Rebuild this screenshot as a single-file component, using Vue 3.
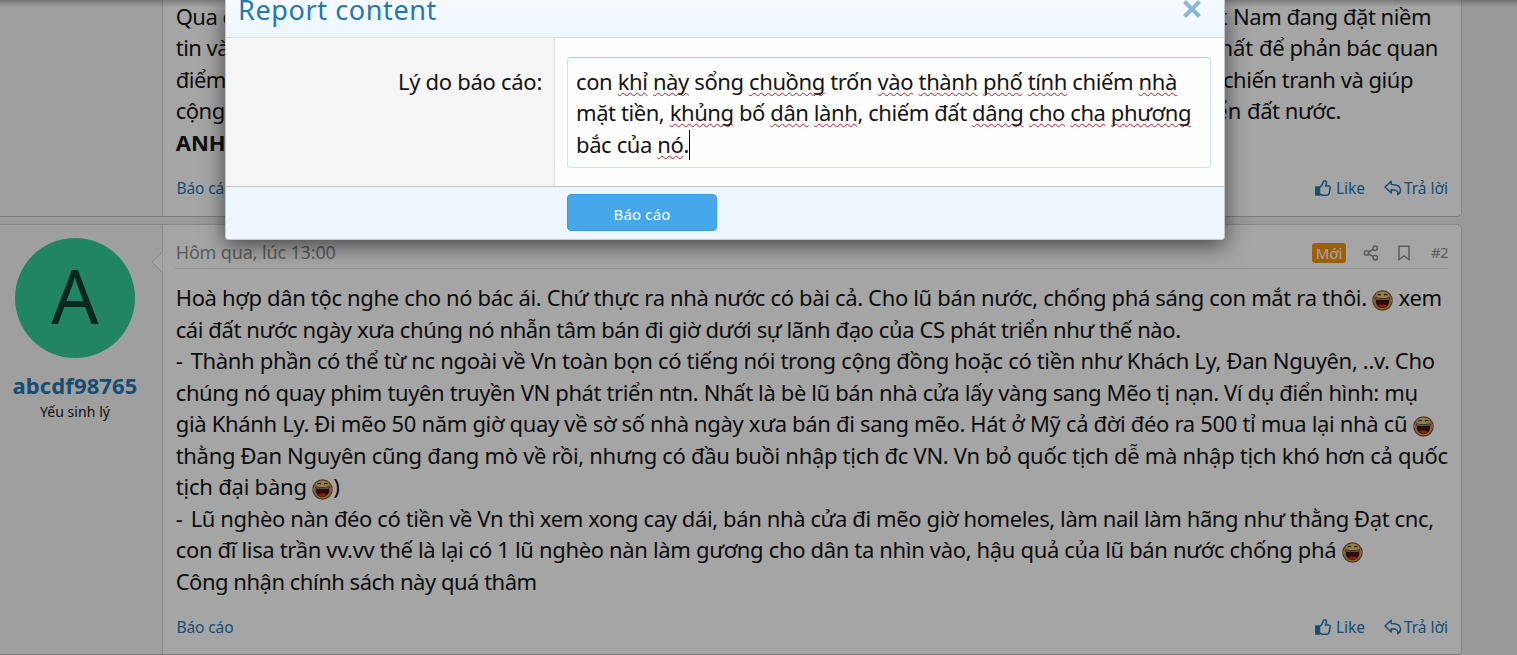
<template>
  <div class="page">
    <svg class="sprites" aria-hidden="true">
      <symbol id="thumb" viewBox="0 0 16 16">
        <path d="M.8 7h3.700v8.200H.8z" fill="currentColor" />
        <path d="M.8 7h3.700v8H.8zM4.500 7.600c2-1.600 3.200-3.200 3.600-5.100C8.300 1.300 8.700.8 9.500.8c1.500 0 2.100 1.100 1.900 2.500-.1 1-.6 2-1 2.700h3.100c1.100 0 1.800.9 1.600 1.900l-.9 5.300c-.2 1.300-.9 2-2.200 2H8.300c-1.500 0-2.500-.4-3.800-1.200" fill="none" stroke="currentColor" stroke-width="1.500" stroke-linejoin="round" />
      </symbol>
      <symbol id="reply" viewBox="0 0 18 16">
        <path d="M1 7 7.200 1.200v3.200c5.400 0 9.300 1.400 9.300 5.700 0 1.900-1.100 3.700-2.800 4.500.8-3.100-.8-4.800-6.500-4.800V13z" fill="none" stroke="currentColor" stroke-width="1.500" stroke-linejoin="round" />
      </symbol>
      <symbol id="smile" viewBox="0 0 21 21">
        <circle cx="10.500" cy="10.500" r="9.700" fill="#c99b45" stroke="#6f5735" stroke-width="1.200" />
        <ellipse cx="10.500" cy="5" rx="6.500" ry="3.200" fill="#e6c774" />
        <path d="M5.500 5q1.700-1.300 3.500 0M12 5q1.700-1.300 3.500 0" fill="none" stroke="#30200e" stroke-width="1.200" />
        <path d="M3.300 7.500q7.200 1.500 14.400 0c.3 6.500-2.700 10.500-7.200 10.500s-7.500-4-7.200-10.500z" fill="#421713" />
        <path d="M4.200 8q6.300 1.400 12.600 0v1.700H4.200z" fill="#a39a8c" />
        <path d="M6 15.500q4.500-2.500 9 0-1.500 2.300-4.500 2.300T6 15.500z" fill="#e3211d" />
        <circle cx="2" cy="10.500" r="1.900" fill="#d48981" />
        <circle cx="19" cy="10.500" r="1.900" fill="#d48981" />
      </symbol>
    </svg>

    <article class="post first">
      <aside class="user"></aside>
      <div class="main">
        <div class="body">
          <div v-for="line in hiddenLines" :key="line.start" class="line split">
            <span :class="line.bold ? 'strong' : 'start'">{{ line.start }}</span>
            <span v-if="line.end" class="tail" :style="{ marginRight: 1448 - line.right + 'px' }">{{ line.pre }}<span v-fit="line.width" class="fit">{{ line.end }}</span></span>
          </div>
        </div>
        <footer class="actions">
          <a v-fit="57" class="fit">Báo cáo</a>
          <a class="like"><svg><use href="#thumb" /></svg><span v-fit="29" class="fit">Like</span></a>
          <a class="reply"><svg><use href="#reply" /></svg><span v-fit="44" class="fit">Trả lời</span></a>
        </footer>
      </div>
    </article>

    <article class="post second">
      <aside class="user">
        <div class="avatar">A</div>
        <a v-fit="125" class="name fit">abcdf98765</a>
        <span v-fit="70" class="rank fit">Yếu sinh lý</span>
      </aside>
      <div class="main">
        <svg class="arrow" viewBox="0 0 12 24"><path d="M11.500 1.500 1 12l10.500 10.500" /></svg>
        <header class="meta">
          <time v-fit="160" class="fit">Hôm qua, lúc 13:00</time>
          <span class="badge">Mới</span>
          <svg class="share" viewBox="0 0 16 16">
            <circle cx="3.500" cy="8" r="2.200" /><circle cx="12.200" cy="3.200" r="2.200" /><circle cx="12.200" cy="12.800" r="2.200" />
            <path d="m5.500 7 4.700-2.700M5.500 9l4.700 2.700" />
          </svg>
          <svg class="bookmark" viewBox="0 0 12 16"><path d="M1 1.200h10v13.300l-5-3.600-5 3.600z" /></svg>
          <span v-fit="17" class="number fit">#2</span>
        </header>
        <div class="body">
          <div v-for="(line, i) in lines" :key="i" class="line">
            <span v-if="line.item" class="dash">-</span><span v-fit="line.width" class="fit"><template v-for="(part, j) in line.text.split('*')" :key="j"><svg v-if="j" class="smile"><use href="#smile" /></svg>{{ part }}</template></span>
          </div>
        </div>
        <footer class="actions">
          <a v-fit="57" class="fit">Báo cáo</a>
          <a class="like"><svg><use href="#thumb" /></svg><span v-fit="29" class="fit">Like</span></a>
          <a class="reply"><svg><use href="#reply" /></svg><span v-fit="44" class="fit">Trả lời</span></a>
        </footer>
      </div>
    </article>

    <div class="overlay">
      <div class="dialog" role="dialog">
        <header class="title">
          <span v-fit="199" class="fit">Report content</span>
          <svg class="close" viewBox="0 0 20 20"><path d="m2.500 2.500 15 15m0-15-15 15" /></svg>
        </header>
        <div class="row">
          <label class="label"><span v-fit="144" class="fit">Lý do báo cáo:</span></label>
          <div class="field">
            <div class="textarea" role="textbox">
              <div v-for="(line, i) in reason" :key="i" class="line">
                <span v-fit="line.width" class="fit"><template v-for="(part, j) in line.text.split('_')" :key="j"><span :class="{ wrong: j % 2 }">{{ part }}</span></template></span><i v-if="i === reason.length - 1" class="caret"></i>
              </div>
            </div>
          </div>
        </div>
        <footer class="submit">
          <button type="button"><span v-fit="57" class="fit">Báo cáo</span></button>
        </footer>
      </div>
    </div>
  </div>
</template>

<script setup>
// Spread the letters so that the text takes the given width
const vFit = {
  mounted(el, { value }) {
    const spacing = (value - el.getBoundingClientRect().width) / el.textContent.length
    el.style.letterSpacing = `${spacing}px`
  },
}

const hiddenLines = [
  { start: 'Qua ch', pre: 'Việt ', end: 'Nam đang đặt niềm', width: 198, right: 1431 },
  { start: 'tin và', pre: 'nhất ', end: 'để phản bác quan', width: 179, right: 1438 },
  { start: 'điểm', pre: '', end: 'chiến tranh và giúp', width: 190, right: 1413 },
  { start: 'cộng', pre: 'triển ', end: 'đất nước.', width: 94, right: 1341 },
  { start: 'ANH', bold: true },
]

// * marks a smiley
const lines = [
  { width: 1266, text: 'Hoà hợp dân tộc nghe cho nó bác ái. Chứ thực ra nhà nước có bài cả. Cho lũ bán nước, chống phá sáng con mắt ra thôi. * xem' },
  { width: 1005, text: 'cái đất nước ngày xưa chúng nó nhẫn tâm bán đi giờ dưới sự lãnh đạo của CS phát triển như thế nào.' },
  { item: true, width: 1244, text: 'Thành phần có thể từ nc ngoài về Vn toàn bọn có tiếng nói trong cộng đồng hoặc có tiền như Khách Ly, Đan Nguyên, ..v. Cho' },
  { width: 1242, text: 'chúng nó quay phim tuyên truyền VN phát triển ntn. Nhất là bè lũ bán nhà cửa lấy vàng sang Mẽo tị nạn. Ví dụ điển hình: mụ' },
  { width: 1258, text: 'già Khánh Ly. Đi mẽo 50 năm giờ quay về sờ số nhà ngày xưa bán đi sang mẽo. Hát ở Mỹ cả đời đéo ra 500 tỉ mua lại nhà cũ *' },
  { width: 1272, text: 'thằng Đan Nguyên cũng đang mò về rồi, nhưng có đầu buồi nhập tịch đc VN. Vn bỏ quốc tịch dễ mà nhập tịch khó hơn cả quốc' },
  { width: 164, text: 'tịch đại bàng *)' },
  { item: true, width: 1243, text: 'Lũ nghèo nàn đéo có tiền về Vn thì xem xong cay dái, bán nhà cửa đi mẽo giờ homeles, làm nail làm hãng như thằng Đạt cnc,' },
  { width: 1187, text: 'con đĩ lisa trần vv.vv thế là lại có 1 lũ nghèo nàn làm gương cho dân ta nhìn vào, hậu quả của lũ bán nước chống phá *' },
  { width: 361, text: 'Công nhận chính sách này quá thâm' },
]

// words between underscores are flagged by the spell checker
const reason = [
  { width: 601, text: 'con _khỉ_ _này_ sổng _chuồng_ trốn _vào_ _thành_ _phố_ _tính_ chiếm _nhà_' },
  { width: 615, text: 'mặt tiền, _khủng_ bố _dân_ _lành_, chiếm đất _dâng_ _cho_ _cha_ _phương_' },
  { width: 113, text: 'bắc của _nó_.' },
]
</script>

<style>
body {
  background: #ebebeb;
  overflow: hidden;
}
</style>

<style scoped>
.page {
  position: relative;
  height: 655px;
  overflow: hidden;
  background: #ebebeb;
  color: #141414;
  font: 22px/31.5px "Noto Sans", "Open Sans", sans-serif;
}

.page * {
  box-sizing: border-box;
}

.sprites {
  position: absolute;
  width: 0;
  height: 0;
}

.fit {
  display: inline-block;
  white-space: pre;
}

.post {
  display: flex;
  width: 1462px;
  background: #fefefe;
  border: 1px solid #d2d2d2;
  border-bottom-color: #c0c0c0;
  border-left: 0;
}

.first {
  height: 217px;
  border-top: 0;
  border-radius: 0 0 5px 0;
}

.second {
  height: 431px;
  margin-top: 7px;
  border-radius: 0 5px 5px 0;
}

.user {
  display: flex;
  flex: none;
  flex-direction: column;
  align-items: center;
  width: 163px;
  padding: 13px 12px 0 0;
  background: #f5f5f5;
  border-right: 1px solid #d2d2d2;
}

.avatar {
  width: 120px;
  height: 120px;
  border-radius: 50%;
  background: #3c9;
  color: #0f3d2e;
  font-size: 74px;
  line-height: 116px;
  text-align: center;
}

.name {
  margin-top: 12px;
  color: #2577b1;
  font-weight: 700;
  line-height: 30px;
}

.rank {
  margin-top: 2px;
  font-size: 14px;
  line-height: 20px;
}

.main {
  position: relative;
  flex: 1;
  padding: 0 13px 0 12px;
}

.first .main {
  padding-top: 1.5px;
}

.body {
  margin-top: -1px;
  padding-left: 0.7px;
}

.arrow {
  position: absolute;
  left: -12px;
  top: 25px;
  width: 12px;
  height: 24px;
  fill: #fefefe;
  stroke: #d2d2d2;
}

.meta {
  display: flex;
  align-items: center;
  height: 44px;
  padding: 13px 0 0 0.7px;
  margin-bottom: 14px;
  border-bottom: 1px solid #dfdfdf;
  color: #8c8c8c;
  font-size: 18px;
}

.meta svg {
  fill: none;
  stroke: currentColor;
  stroke-width: 1.5;
}

.badge {
  width: 34px;
  height: 20px;
  margin-left: auto;
  border-radius: 3px;
  background: #f2930d;
  color: #fefefe;
  font-size: 15px;
  line-height: 21px;
  text-align: center;
}

.share {
  width: 16px;
  height: 16px;
  margin-left: 17px;
}

.bookmark {
  width: 12px;
  height: 16px;
  margin-left: 19px;
}

.number {
  margin-left: 21px;
  font-size: 15px;
}

.line {
  height: 31.5px;
  white-space: pre;
}

.split {
  display: flex;
}

.start {
  letter-spacing: -0.5px;
}

.strong {
  font-weight: 700;
}

.tail {
  margin-left: auto;
}

.dash {
  display: inline-block;
  width: 15px;
}

.smile {
  width: 21px;
  height: 21px;
  vertical-align: -5px;
}

.actions {
  display: flex;
  align-items: center;
  height: 20px;
  margin-top: 19.5px;
  padding-left: 1.5px;
  color: #2577b1;
  font-size: 15.5px;
  line-height: 20px;
}

.like,
.reply {
  display: flex;
  align-items: center;
}

.like {
  margin-left: auto;
}

.like svg {
  width: 16px;
  height: 16px;
  margin-right: 5px;
}

.reply {
  margin-left: 19px;
}

.reply svg {
  width: 18px;
  height: 16px;
  margin-right: 2px;
}

.overlay {
  position: absolute;
  inset: 0;
  display: flex;
  align-items: flex-start;
  padding-left: 225px;
  background: linear-gradient(rgba(0, 0, 0, 0.25), transparent 7px), rgba(0, 0, 0, 0.35);
}

.dialog {
  width: 1000px;
  height: 240px;
  border: 1px solid #c4c9cf;
  border-top: 0;
  border-radius: 0 0 4px 4px;
  background: #fefefe;
  box-shadow: 0 5px 22px rgba(0, 0, 0, 0.6);
}

.title {
  display: flex;
  justify-content: space-between;
  height: 38px;
  padding: 0 22px 0 12px;
  border-bottom: 1px solid #d8dce2;
  background: linear-gradient(#f5faff, #edf6fd);
  color: #2577b1;
  font-size: 27px;
  line-height: 20px;
}

.close {
  width: 20px;
  height: 20px;
  margin-top: -1px;
  fill: none;
  stroke: #8bb6d5;
  stroke-width: 4;
}

.row {
  display: flex;
  height: 149px;
  border-bottom: 1px solid #bec7cf;
}

.label {
  width: 329px;
  padding: 27.5px 12px 0 0;
  border-right: 1px solid #dfdfdf;
  background: #f5f5f5;
  text-align: right;
}

.field {
  flex: 1;
  padding: 19px 13px 0 12px;
}

.textarea {
  height: 111px;
  padding: 8px;
  border: 1px solid #cbe1ed;
  border-top-color: #a9cddf;
  border-radius: 4px;
}

.textarea .line {
  margin-top: -0.5px;
  margin-bottom: 0.5px;
}

.wrong {
  text-decoration: underline wavy #c4191c 1px;
  text-decoration-skip-ink: none;
  text-underline-offset: 2px;
}

.caret {
  display: inline-block;
  width: 1px;
  height: 30px;
  background: #000;
  vertical-align: -7px;
}

.submit {
  height: 52px;
  padding: 7px 0 0 341px;
  border-radius: 0 0 3px 3px;
  background: #edf6fd;
}

button {
  display: block;
  width: 150px;
  height: 37px;
  padding: 2px 0 0;
  border: 1px solid #3c9de2;
  border-radius: 4px;
  background: #47a7eb;
  color: #fff;
  font: 15px/20px "Noto Sans", "Open Sans", sans-serif;
}
</style>
